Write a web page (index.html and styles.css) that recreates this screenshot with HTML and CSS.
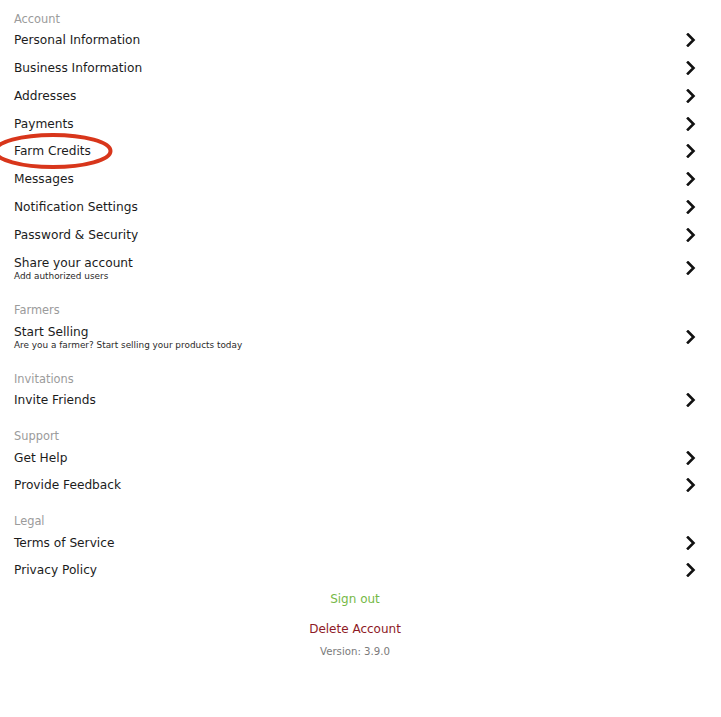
FILE: index.html
```html
<!DOCTYPE html>
<html>
<head>
<meta charset="utf-8">
<link rel="stylesheet" href="styles.css">
</head>
<body>
<div class="page">
  <section class="group">
    <div class="label">Account</div>
    <div class="row"><div class="text"><div class="title">Personal Information</div></div><svg class="chev" viewBox="0 0 10 14"><path d="M2 1.5 L7.5 7 L2 12.5"/></svg></div>
    <div class="row"><div class="text"><div class="title">Business Information</div></div><svg class="chev" viewBox="0 0 10 14"><path d="M2 1.5 L7.5 7 L2 12.5"/></svg></div>
    <div class="row"><div class="text"><div class="title">Addresses</div></div><svg class="chev" viewBox="0 0 10 14"><path d="M2 1.5 L7.5 7 L2 12.5"/></svg></div>
    <div class="row"><div class="text"><div class="title">Payments</div></div><svg class="chev" viewBox="0 0 10 14"><path d="M2 1.5 L7.5 7 L2 12.5"/></svg></div>
    <div class="row marked"><div class="text"><div class="title">Farm Credits</div></div><svg class="chev" viewBox="0 0 10 14"><path d="M2 1.5 L7.5 7 L2 12.5"/></svg>
      <svg class="ring" viewBox="0 0 124 40"><ellipse cx="62" cy="20" rx="57.5" ry="16" /></svg>
    </div>
    <div class="row"><div class="text"><div class="title">Messages</div></div><svg class="chev" viewBox="0 0 10 14"><path d="M2 1.5 L7.5 7 L2 12.5"/></svg></div>
    <div class="row"><div class="text"><div class="title">Notification Settings</div></div><svg class="chev" viewBox="0 0 10 14"><path d="M2 1.5 L7.5 7 L2 12.5"/></svg></div>
    <div class="row"><div class="text"><div class="title">Password &amp; Security</div></div><svg class="chev" viewBox="0 0 10 14"><path d="M2 1.5 L7.5 7 L2 12.5"/></svg></div>
    <div class="row tall"><div class="text"><div class="title">Share your account</div><div class="sub">Add authorized users</div></div><svg class="chev" viewBox="0 0 10 14"><path d="M2 1.5 L7.5 7 L2 12.5"/></svg></div>
  </section>
  <section class="group">
    <div class="label">Farmers</div>
    <div class="row tall"><div class="text"><div class="title">Start Selling</div><div class="sub">Are you a farmer? Start selling your products today</div></div><svg class="chev" viewBox="0 0 10 14"><path d="M2 1.5 L7.5 7 L2 12.5"/></svg></div>
  </section>
  <section class="group">
    <div class="label">Invitations</div>
    <div class="row"><div class="text"><div class="title">Invite Friends</div></div><svg class="chev" viewBox="0 0 10 14"><path d="M2 1.5 L7.5 7 L2 12.5"/></svg></div>
  </section>
  <section class="group">
    <div class="label">Support</div>
    <div class="row"><div class="text"><div class="title">Get Help</div></div><svg class="chev" viewBox="0 0 10 14"><path d="M2 1.5 L7.5 7 L2 12.5"/></svg></div>
    <div class="row"><div class="text"><div class="title">Provide Feedback</div></div><svg class="chev" viewBox="0 0 10 14"><path d="M2 1.5 L7.5 7 L2 12.5"/></svg></div>
  </section>
  <section class="group">
    <div class="label">Legal</div>
    <div class="row"><div class="text"><div class="title">Terms of Service</div></div><svg class="chev" viewBox="0 0 10 14"><path d="M2 1.5 L7.5 7 L2 12.5"/></svg></div>
    <div class="row"><div class="text"><div class="title">Privacy Policy</div></div><svg class="chev" viewBox="0 0 10 14"><path d="M2 1.5 L7.5 7 L2 12.5"/></svg></div>
  </section>
  <footer class="foot">
    <div class="signout">Sign out</div>
    <div class="delete">Delete Account</div>
    <div class="version">Version: 3.9.0</div>
  </footer>
</div>
</body>
</html>
```
FILE: styles.css
```css
html, body {
  margin: 0;
  padding: 0;
  background: #ffffff;
}
body {
  font-family: "DejaVu Sans", "Open Sans", sans-serif;
  color: #1c1c1c;
  width: 721px;
  height: 717px;
  overflow: hidden;
}
.page {
  padding: 11px 25px 0 14px;
  display: flex;
  flex-direction: column;
  gap: 13.5px;
}
.group {
  display: flex;
  flex-direction: column;
}
.label {
  font-size: 11.4px;
  line-height: 16px;
  color: #9b9b9b;
}
.row {
  position: relative;
  display: flex;
  align-items: center;
  justify-content: space-between;
  height: 27.75px;
}
.row.tall {
  height: 39.5px;
}
.text {
  display: flex;
  flex-direction: column;
}
.title {
  font-size: 12.2px;
  line-height: 15px;
}
.sub {
  font-size: 8.9px;
  line-height: 12px;
  color: #2a2a2a;
  margin-top: -1px;
}
.chev {
  width: 10px;
  height: 14px;
  flex: none;
  margin-top: -1px;
}
.chev path {
  fill: none;
  stroke: #111111;
  stroke-width: 2.6;
  stroke-linecap: square;
  stroke-linejoin: miter;
}
.ring {
  position: absolute;
  left: -23px;
  top: -7px;
  width: 124px;
  height: 40px;
  overflow: visible;
}
.ring ellipse {
  fill: none;
  stroke: #d8361b;
  stroke-width: 4;
}
.foot {
  display: flex;
  flex-direction: column;
  align-items: center;
  margin-top: -7px;
}
.signout {
  font-size: 12px;
  line-height: 16px;
  color: #76b947;
}
.delete {
  font-size: 12px;
  line-height: 16px;
  color: #8e1a26;
  margin-top: 14px;
}
.version {
  font-size: 10.2px;
  line-height: 14px;
  color: #7a7a7a;
  margin-top: 8px;
}
```
